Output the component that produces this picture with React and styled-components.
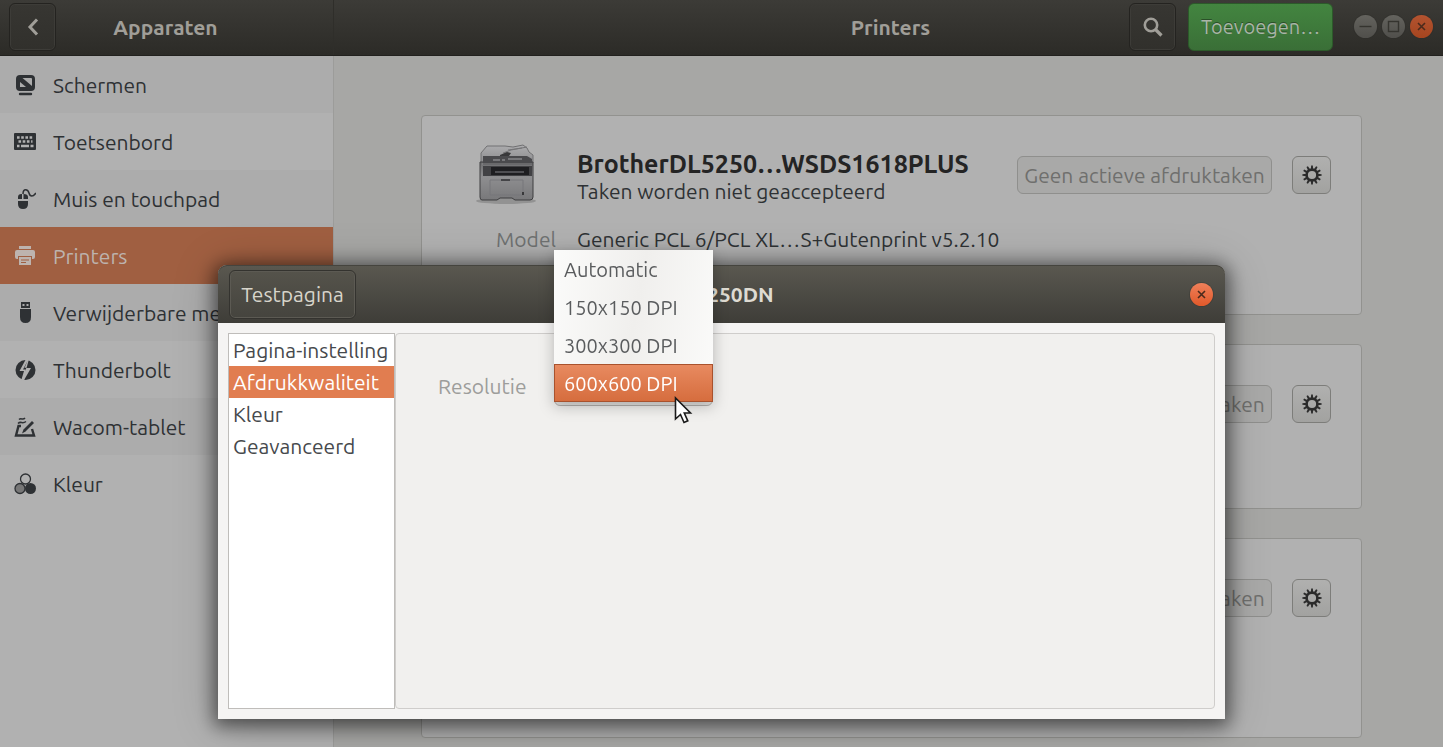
import React, { useState } from 'react';
import styled, { createGlobalStyle } from 'styled-components';

const devices = [
  { id: 'displays', label: 'Schermen' },
  { id: 'keyboard', label: 'Toetsenbord' },
  { id: 'mouse', label: 'Muis en touchpad' },
  { id: 'printers', label: 'Printers' },
  { id: 'removable', label: 'Verwijderbare media' },
  { id: 'thunderbolt', label: 'Thunderbolt' },
  { id: 'wacom', label: 'Wacom-tablet' },
  { id: 'color', label: 'Kleur' },
];

const printers = [
  {
    id: 1,
    size: 200,
    name: 'BrotherDL5250…WSDS1618PLUS',
    status: 'Taken worden niet geaccepteerd',
    model: 'Generic PCL 6/PCL XL…S+Gutenprint v5.2.10',
  },
  { id: 2, size: 165 },
  { id: 3, size: 200 },
];

const tabs = ['Pagina-instelling', 'Afdrukkwaliteit', 'Kleur', 'Geavanceerd'];
const resolutions = ['Automatic', '150x150 DPI', '300x300 DPI', '600x600 DPI'];

const glyphs = {
  displays: (
    <>
      <rect x="2" y="1" width="19" height="16" rx="4" fill="currentColor" />
      <path d="M8.500 4H17q1 0 1 1v7Z" fill="#acacac" />
      <path d="M6 8v5h6Z" fill="#acacac" />
      <path d="M6 20h11" stroke="currentColor" strokeWidth="2.400" strokeLinecap="round" />
    </>
  ),
  keyboard: (
    <>
      <rect x="0" y="2" width="22" height="17" rx="1" fill="currentColor" />
      <path d="M3 6.500h16" stroke="#b1b1b1" strokeWidth="2.400" strokeDasharray="2.600 1.600" />
      <path d="M4.500 10.500h14" stroke="#b1b1b1" strokeWidth="2.400" strokeDasharray="2.600 1.600" />
      <path d="M3 15h2.500M7 15h8M16.500 15h3" stroke="#b1b1b1" strokeWidth="2.400" />
    </>
  ),
  mouse: (
    <>
      <path d="M4 11V9q0-3 3.500-3H8v5ZM9.500 6q4.500 0 4.500 3v2H9.500ZM4 13h10v3q0 5-5 5t-5-5Z" fill="currentColor" />
      <path d="M9 6c0-6 5-5 6-1s4 4 7 0" fill="none" stroke="currentColor" strokeWidth="1.500" />
    </>
  ),
  printers: (
    <>
      <path d="M5 1h12v3H5ZM3 5h16q2 0 2 2v5q0 2-2 2h-1v-3H4v3H3q-2 0-2-2V7q0-2 2-2Z" fill="currentColor" />
      <path d="M5 12h12v8H5Z" fill="currentColor" />
      <path d="M7 15h8M7 17.500h5" stroke="#a05f41" strokeWidth="1.200" />
    </>
  ),
  removable: (
    <>
      <path d="M7 0h9v6H7Z" fill="currentColor" />
      <path d="M8.500 3h2M12.500 3h2" stroke="#acacac" strokeWidth="2" />
      <path d="M6 7h11v8q0 6-5.500 6T6 15Z" fill="currentColor" />
    </>
  ),
  thunderbolt: (
    <>
      <circle cx="11.500" cy="11" r="10" fill="currentColor" />
      <path d="M12 0 5.500 12H10L7 22h2.500L17 9h-4.500L15 0Z" fill="#b1b1b1" />
      <path d="M11 12.500 12.500 8.500 10.500 9 13.500 2 9 10.500h3Z" fill="currentColor" />
    </>
  ),
  wacom: (
    <>
      <path d="M7 10H4.500L2 19.500H20L18 13" fill="none" stroke="currentColor" strokeWidth="2.400" />
      <path d="M8 17.500 9.500 13.500 18 5l2 2-8.500 8.500Z" fill="currentColor" />
      <path d="M4 7.500c3-3 4 1 8-2M5 3.500c2-2 4 1 6-1.500" fill="none" stroke="currentColor" strokeWidth="1.500" />
    </>
  ),
  color: (
    <>
      <circle cx="11.500" cy="6" r="5" fill="none" stroke="currentColor" strokeWidth="1.300" />
      <circle cx="6" cy="15.500" r="5" fill="#777" stroke="currentColor" strokeWidth="1.300" />
      <circle cx="16.500" cy="15.500" r="5.500" fill="currentColor" />
    </>
  ),
};

const DeviceIcon = ({ id }) => (
  <svg width="22" height="22" viewBox="0 0 22 22" aria-hidden="true">
    {glyphs[id]}
  </svg>
);

const GearIcon = () => (
  <svg width="20" height="20" viewBox="0 0 20 20" aria-hidden="true">
    <circle cx="10" cy="10" r="5.400" fill="none" stroke="#2b2b2b" strokeWidth="2.600" />
    {Array.from({ length: 12 }, (_, i) => (
      <path
        key={i}
        d="M9.200.400h1.600l.400 4H8.800Z"
        fill="#2b2b2b"
        transform={`rotate(${i * 30} 10 10)`}
      />
    ))}
  </svg>
);

const PrinterPicture = () => (
  <svg width="64" height="64" viewBox="0 0 64 64" aria-hidden="true">
    <defs>
      <linearGradient id="printerBody" x1="0" y1="0" x2="0" y2="1">
        <stop offset="0" stopColor="#6c6c6e" />
        <stop offset=".4" stopColor="#8e8e90" />
        <stop offset="1" stopColor="#78787a" />
      </linearGradient>
      <linearGradient id="printerTop" x1="0" y1="0" x2="0" y2="1">
        <stop offset="0" stopColor="#adadaf" />
        <stop offset="1" stopColor="#8c8c8e" />
      </linearGradient>
    </defs>
    <ellipse cx="32" cy="57" rx="30" ry="3" fill="#929292" />
    <path d="M7 16V9l6-7h18l8 1 10-2 4 3 2 4 4 3v8H7Z" fill="url(#printerTop)" stroke="#707072" />
    <path d="m29 9 8-3 16-3M34 6l14-2" fill="none" stroke="#757577" />
    <path d="m26 11 7-3 4 1-2 3h-9Z" fill="#38383a" />
    <path d="M6 18h53v35q0 3-3 3H41l-3-2H26l-3 2H8q-2 0-2-3Z" fill="url(#printerBody)" stroke="#3e3e40" />
    <path d="M9 12h44l5 3v6H9Z" fill="#4a4a4d" />
    <path d="M19 16h7M28 16h3M34 15h14" stroke="#77777a" strokeWidth="2" />
    <path d="M8 20h50" stroke="#88888b" />
    <path d="M9 22h49v10H9Z" fill="#414144" />
    <path d="M17 23h38v8H17Z" fill="#1e1e21" />
    <path d="M21 28h29" stroke="#4e4e52" strokeWidth="2" />
    <path d="M16 36v15h33V36Z" fill="none" stroke="#77777a" />
    <path d="M27 36h9" stroke="#444447" strokeWidth="2" />
    <path d="M49 48v3" stroke="#38383a" strokeWidth="2" />
  </svg>
);

const CloseGlyph = () => (
  <svg width="23" height="23" viewBox="0 0 23 23" aria-hidden="true">
    <path d="m8 8 7 7m0-7-7 7" stroke="#4a2a1c" strokeWidth="1.600" />
  </svg>
);

const App = () => {
  const [device, setDevice] = useState('printers');
  const [tab, setTab] = useState('Afdrukkwaliteit');
  const [resolution, setResolution] = useState('600x600 DPI');

  return (
    <Window>
      <GlobalStyle />
      <HeaderBar>
        <SideHeader>
          <DarkButton aria-label="Terug">
            <svg width="12" height="18" viewBox="0 0 12 18" aria-hidden="true">
              <path d="m10 1.500-7 7.500 7 7.500" fill="none" stroke="#a09e98" strokeWidth="3" />
            </svg>
          </DarkButton>
          <Title>Apparaten</Title>
        </SideHeader>
        <MainHeader>
          <Title>Printers</Title>
          <HeaderActions>
            <DarkButton aria-label="Zoeken">
              <svg width="22" height="22" viewBox="0 0 22 22" aria-hidden="true">
                <circle cx="9" cy="9" r="6.200" fill="none" stroke="#a09e98" strokeWidth="2.600" />
                <path d="m13.500 13.500 6 6" stroke="#a09e98" strokeWidth="3.200" />
              </svg>
            </DarkButton>
            <AddButton>Toevoegen…</AddButton>
            <WindowControls>
              <RoundButton aria-label="Minimaliseren">
                <svg width="23" height="23" viewBox="0 0 23 23" aria-hidden="true">
                  <path d="M5.500 11.500h12" stroke="#35342f" strokeWidth="1.400" />
                </svg>
              </RoundButton>
              <RoundButton aria-label="Maximaliseren">
                <svg width="23" height="23" viewBox="0 0 23 23" aria-hidden="true">
                  <rect x="6.500" y="6.500" width="10" height="10" fill="none" stroke="#35342f" strokeWidth="1.400" />
                </svg>
              </RoundButton>
              <RoundButton $tone="dimmed" aria-label="Sluiten">
                <CloseGlyph />
              </RoundButton>
            </WindowControls>
          </HeaderActions>
        </MainHeader>
      </HeaderBar>

      <Body>
        <Sidebar>
          {devices.map(({ id, label }) => (
            <DeviceRow key={id} $active={id === device} onClick={() => setDevice(id)}>
              <DeviceIcon id={id} />
              {label}
            </DeviceRow>
          ))}
        </Sidebar>

        <Content>
          {printers.map((printer) => (
            <Card key={printer.id} $size={printer.size}>
              <Picture>{printer.name && <PrinterPicture />}</Picture>
              <Summary>
                <Names>
                  <PrinterName>{printer.name}</PrinterName>
                  <Status>{printer.status}</Status>
                </Names>
                <CardActions>
                  <JobsButton disabled>Geen actieve afdruktaken</JobsButton>
                  <GearButton aria-label="Printeropties">
                    <GearIcon />
                  </GearButton>
                </CardActions>
              </Summary>
              {printer.model && (
                <>
                  <Term>Model</Term>
                  <Value>{printer.model}</Value>
                </>
              )}
            </Card>
          ))}
        </Content>
      </Body>

      <Overlay>
        <Dialog role="dialog" aria-labelledby="dialog-title">
          <DialogHeader>
            <TestButton>Testpagina</TestButton>
            <Title as="h2" id="dialog-title" $bright>
              DL5250DN
            </Title>
            <RoundButton $tone="bright" aria-label="Venster sluiten">
              <CloseGlyph />
            </RoundButton>
          </DialogHeader>
          <DialogBody>
            <TabList>
              {tabs.map((name) => (
                <TabButton key={name} $active={name === tab} onClick={() => setTab(name)}>
                  {name}
                </TabButton>
              ))}
            </TabList>
            <Panel>
              <FieldLabel htmlFor="resolution">Resolutie</FieldLabel>
              <Combo>
                <ComboSelect
                  id="resolution"
                  value={resolution}
                  onChange={(e) => setResolution(e.target.value)}>
                  {resolutions.map((value) => (
                    <option key={value}>{value}</option>
                  ))}
                </ComboSelect>
                <Menu role="listbox" aria-label="Resolutie">
                  {resolutions.map((value) => (
                    <MenuItem
                      key={value}
                      role="option"
                      aria-selected={value === resolution}
                      $active={value === resolution}
                      onClick={() => setResolution(value)}>
                      {value}
                    </MenuItem>
                  ))}
                  <Pointer width="19" height="30" viewBox="0 0 19 30" aria-hidden="true">
                    <path
                      d="M1.500 2v21l5-4.500 3.500 8 3.800-1.700-3.500-7.800h6.200Z"
                      fill="#fff"
                      stroke="#1a1a1a"
                      strokeWidth="1.600"
                    />
                  </Pointer>
                </Menu>
              </Combo>
            </Panel>
          </DialogBody>
        </Dialog>
      </Overlay>
    </Window>
  );
};

export default App;

const GlobalStyle = createGlobalStyle`
  * {
    box-sizing: border-box;
  }
  body {
    margin: 0;
    overflow: hidden;
    background: #a7a7a5;
  }
  body, button, select {
    font-family: Ubuntu, 'Noto Sans', 'Open Sans', sans-serif;
    font-size: 21px;
  }
  button {
    margin: 0;
    padding: 0;
    border: 0;
    background: none;
    white-space: nowrap;
  }
  svg {
    display: block;
    flex: none;
  }
`;

const Window = styled.div`
  display: flex;
  flex-direction: column;
  height: 100vh;
  overflow: hidden;
`;

const HeaderBar = styled.header`
  display: flex;
  flex: none;
  height: 56px;
  background: linear-gradient(#3c3b37, #2c2b27);
  border-bottom: 1px solid #22211e;
`;

const SideHeader = styled.div`
  display: grid;
  grid-template-columns: 1fr auto 1fr;
  align-items: center;
  width: 334px;
  padding: 0 11px 2px 9px;
  border-right: 1px solid #2f2e2a;
`;

const MainHeader = styled.div`
  display: grid;
  grid-template-columns: 1fr auto 1fr;
  align-items: center;
  flex: 1;
  padding: 0 10px 2px 14px;

  & > :first-child {
    grid-column: 2;
  }
`;

const Title = styled.h1`
  margin: 0;
  color: ${({ $bright }) => ($bright ? '#dedbd2' : '#a09e98')};
  font-size: 21px;
  font-weight: 700;
  line-height: 24px;
`;

const HeaderActions = styled.div`
  display: flex;
  align-items: center;
  justify-content: flex-end;
  gap: 12px;
`;

const DarkButton = styled.button`
  display: flex;
  align-items: center;
  justify-content: center;
  width: 47px;
  height: 48px;
  border: 1px solid #242320;
  border-radius: 6px;
  background: linear-gradient(#373632, #31302c);
  box-shadow: inset 0 0 0 1px #3d3c38;
`;

const AddButton = styled.button`
  width: 145px;
  height: 48px;
  border: 1px solid #2c5a2a;
  border-radius: 6px;
  background: linear-gradient(#438540, #3a6f37);
  color: #a9b5a7;
  font-size: 20px;
  text-shadow: 0 -1px #2a5028;
`;

const WindowControls = styled.div`
  display: flex;
  gap: 5px;
  margin-left: 9px;
`;

const tones = {
  dimmed: 'linear-gradient(#b35330, #a5451f)',
  bright: 'linear-gradient(#f0805a, #e0592a)',
  plain: 'linear-gradient(#64635e, #504f4b)',
};

const RoundButton = styled.button`
  width: 23px;
  height: 23px;
  border-radius: 50%;
  background: ${({ $tone }) => tones[$tone || 'plain']};
  box-shadow: 0 0 0 1px #2b2a2640;
`;

const Body = styled.div`
  display: flex;
  flex: 1;
  min-height: 0;
`;

const Sidebar = styled.nav`
  width: 334px;
  flex: none;
  border-right: 1px solid #9c9c9a;
  background: #b1b1b1;
`;

const DeviceRow = styled.button`
  display: flex;
  align-items: center;
  gap: 17px;
  width: 100%;
  height: 57px;
  padding: 0 14px;
  background: ${({ $active }) => ($active ? '#a05f41' : '#b1b1b1')};
  color: ${({ $active }) => ($active ? '#bdb3ae' : '#2e3134')};

  &:nth-child(odd) {
    background: ${({ $active }) => ($active ? '#a05f41' : '#acacac')};
  }
`;

const Content = styled.main`
  display: flex;
  flex: 1;
  flex-direction: column;
  gap: 29px;
  min-width: 0;
  padding: 59px 81px 0 87px;
`;

const Card = styled.section`
  display: grid;
  flex: none;
  grid-template-columns: 100px 1fr;
  align-content: start;
  gap: 22px 21px;
  min-height: ${({ $size }) => $size}px;
  padding: 28px 30px 0 34px;
  border: 1px solid #92928f;
  border-radius: 4px;
  background: #b1b1b1;
`;

const Picture = styled.div`
  display: flex;
  justify-content: center;
  height: 60px;
`;

const Summary = styled.div`
  display: flex;
  align-items: flex-start;
  justify-content: space-between;
`;

const Names = styled.div`
  padding-top: 6px;
  white-space: nowrap;
`;

const PrinterName = styled.h2`
  margin: 0;
  color: #242424;
  font-size: 25px;
  font-weight: 700;
  line-height: 28px;
`;

const Status = styled.p`
  margin: 0;
  color: #2e3134;
  line-height: 26px;
`;

const CardActions = styled.div`
  display: flex;
  gap: 20px;
  padding-top: 12px;
`;

const JobsButton = styled.button`
  width: 255px;
  height: 38px;
  border: 1px solid #8f8f8d;
  border-radius: 6px;
  background: #a9a9a8;
  color: #6f6f6d;
`;

const GearButton = styled.button`
  display: flex;
  align-items: center;
  justify-content: center;
  width: 39px;
  height: 38px;
  border: 1px solid #7d7d7a;
  border-radius: 6px;
  background: linear-gradient(#b0b0af, #a2a2a0);
`;

const Term = styled.div`
  color: #6f7171;
  line-height: 26px;
  text-align: right;
`;

const Value = styled.div`
  color: #2e3134;
  line-height: 26px;
  white-space: nowrap;
`;

const Overlay = styled.div`
  position: fixed;
  inset: 0;
  display: flex;
  padding: 265px 218px 28px;
`;

const Dialog = styled.div`
  display: flex;
  flex: 1;
  flex-direction: column;
  border-radius: 9px 9px 0 0;
  background: #f5f4f3;
  box-shadow: 0 3px 18px 4px rgba(0, 0, 0, 0.5), 0 4px 44px rgba(0, 0, 0, 0.25);
`;

const DialogHeader = styled.header`
  display: grid;
  grid-template-columns: 1fr auto 1fr;
  align-items: center;
  height: 58px;
  padding: 0 12px 0 11px;
  border-radius: 9px 9px 0 0;
  background: linear-gradient(#5a5850, #3e3d38);
  box-shadow: inset 0 1px #45443e;

  & > :last-child {
    justify-self: end;
  }
`;

const TestButton = styled.button`
  justify-self: start;
  width: 127px;
  height: 49px;
  border: 1px solid #34332f;
  border-radius: 6px;
  background: linear-gradient(#55534b, #45443e);
  box-shadow: inset 0 0 0 1px #5c5a53;
  color: #d8d5cb;
`;

const DialogBody = styled.div`
  display: flex;
  flex: 1;
  padding: 10px;
`;

const TabList = styled.div`
  width: 167px;
  border: 1px solid #bfbdba;
  background: #fff;
`;

const TabButton = styled.button`
  display: block;
  width: 100%;
  height: 32px;
  padding: 0 4px;
  background: ${({ $active }) => ($active ? '#e17d50' : '#fff')};
  color: ${({ $active }) => ($active ? '#fff' : '#46494c')};
  text-align: left;
`;

const Panel = styled.div`
  display: flex;
  align-items: flex-start;
  flex: 1;
  gap: 28px;
  padding: 33px 42px;
  border: 1px solid #cfcdcb;
  border-radius: 4px;
  background: #f1f0ee;
`;

const FieldLabel = styled.label`
  width: 88px;
  color: #9d9d9b;
  line-height: 38px;
`;

const Combo = styled.div`
  position: relative;
  width: 159px;
`;

const ComboSelect = styled.select`
  display: block;
  width: 100%;
  height: 39px;
  padding: 0 8px;
  border: 1px solid #b3b1ae;
  border-radius: 6px;
  background: #e4e3e1;
  color: #46494c;
  appearance: none;
`;

const Menu = styled.div`
  position: absolute;
  right: 0;
  bottom: 4px;
  left: 0;
  background: linear-gradient(100deg, #fbfbfa, #f0efed 50%, #fbfbfa);
  box-shadow: 0 4px 14px rgba(0, 0, 0, 0.25);
`;

const MenuItem = styled.button`
  display: block;
  width: 100%;
  height: 38px;
  padding: 0 9px;
  border: 1px solid ${({ $active }) => ($active ? '#a9522d' : 'transparent')};
  background: ${({ $active }) => ($active ? 'linear-gradient(#e88a60, #d66d3e)' : 'none')};
  color: ${({ $active }) => ($active ? '#fff' : '#5a5c5e')};
  font-size: 20px;
  text-align: left;
`;

const Pointer = styled.svg`
  position: absolute;
  bottom: -24px;
  left: 120px;
`;
